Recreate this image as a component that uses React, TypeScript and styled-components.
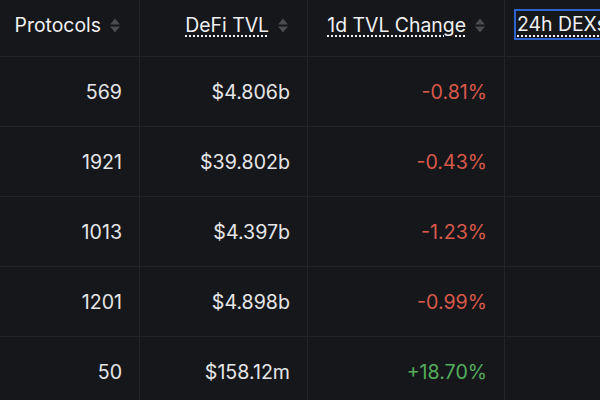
import styled, { createGlobalStyle } from "styled-components"

const GlobalStyle = createGlobalStyle`
    html, body {
        margin: 0;
        padding: 0;
        background: #16171a;
        overflow: hidden;
    }
    body {
        font-family: Inter, "Liberation Sans", sans-serif;
        -webkit-font-smoothing: antialiased;
    }
`

const rows = [
    { protocols: "569", tvl: "$4.806b", change: "-0.81%" },
    { protocols: "1921", tvl: "$39.802b", change: "-0.43%" },
    { protocols: "1013", tvl: "$4.397b", change: "-1.23%" },
    { protocols: "1201", tvl: "$4.898b", change: "-0.99%" },
    { protocols: "50", tvl: "$158.12m", change: "+18.70%" },
]

const SortIcon = () => (
    <svg width="10" height="15" viewBox="0 0 10 15">
        <path d="M5 0.5 L10 6.5 H0 Z" fill="#4a4b4f" />
        <path d="M5 14.5 L10 8.5 H0 Z" fill="#4a4b4f" />
    </svg>
)

const App = () => {
    return (
        <>
            <GlobalStyle />
            <Table>
                <HeaderRow>
                    <HeadCell>
                        <HeadLabel>Protocols</HeadLabel>
                        <SortIcon />
                    </HeadCell>
                    <HeadCell>
                        <HeadLabel dotted>DeFi TVL</HeadLabel>
                        <SortIcon />
                    </HeadCell>
                    <HeadCell>
                        <HeadLabel dotted>1d TVL Change</HeadLabel>
                        <SortIcon />
                    </HeadCell>
                    <HeadCell left>
                        <FocusedLabel dotted>24h DEXs Volume</FocusedLabel>
                    </HeadCell>
                </HeaderRow>
                {rows.map((r) => (
                    <Row key={r.protocols}>
                        <Cell>{r.protocols}</Cell>
                        <Cell>{r.tvl}</Cell>
                        <Cell tone={r.change.startsWith("+") ? "up" : "down"}>{r.change}</Cell>
                        <Cell />
                    </Row>
                ))}
            </Table>
        </>
    )
}

export default App

const Table = styled.div`
    width: 700px;
`

const HeaderRow = styled.div`
    display: grid;
    grid-template-columns: 140px 168px 197px 195px;
    height: 57px;
    border-bottom: 1px solid #232428;
    box-sizing: border-box;
`

const Row = styled(HeaderRow)`
    height: 70px;
`

const HeadCell = styled.div<{ left?: boolean }>`
    display: flex;
    align-items: center;
    justify-content: ${(p) => (p.left ? "flex-start" : "flex-end")};
    gap: 9px;
    padding: 0 19px 7px 11px;
    border-right: 1px solid #232428;
    white-space: nowrap;
    overflow: hidden;
    box-sizing: border-box;
    svg {
        margin-top: 2px;
        flex-shrink: 0;
    }
`

const HeadLabel = styled.span<{ dotted?: boolean }>`
    font-size: 19.4px;
    font-weight: 400;
    color: #f0f0f2;
    text-decoration: ${(p) => (p.dotted ? "underline dotted" : "none")};
    text-decoration-thickness: 2px;
    text-underline-offset: 4px;
`

const FocusedLabel = styled(HeadLabel)`
    outline: 2px solid #2f63d0;
    padding: 1px 2px 2px 1px;
`

const Cell = styled.div<{ tone?: "up" | "down" }>`
    display: flex;
    align-items: center;
    justify-content: flex-end;
    padding: 0 17px 0 11px;
    border-right: 1px solid #232428;
    font-size: 19.6px;
    color: ${(p) => (p.tone === "up" ? "#54ad5d" : p.tone === "down" ? "#d8594a" : "#e6e6e8")};
    box-sizing: border-box;
`
